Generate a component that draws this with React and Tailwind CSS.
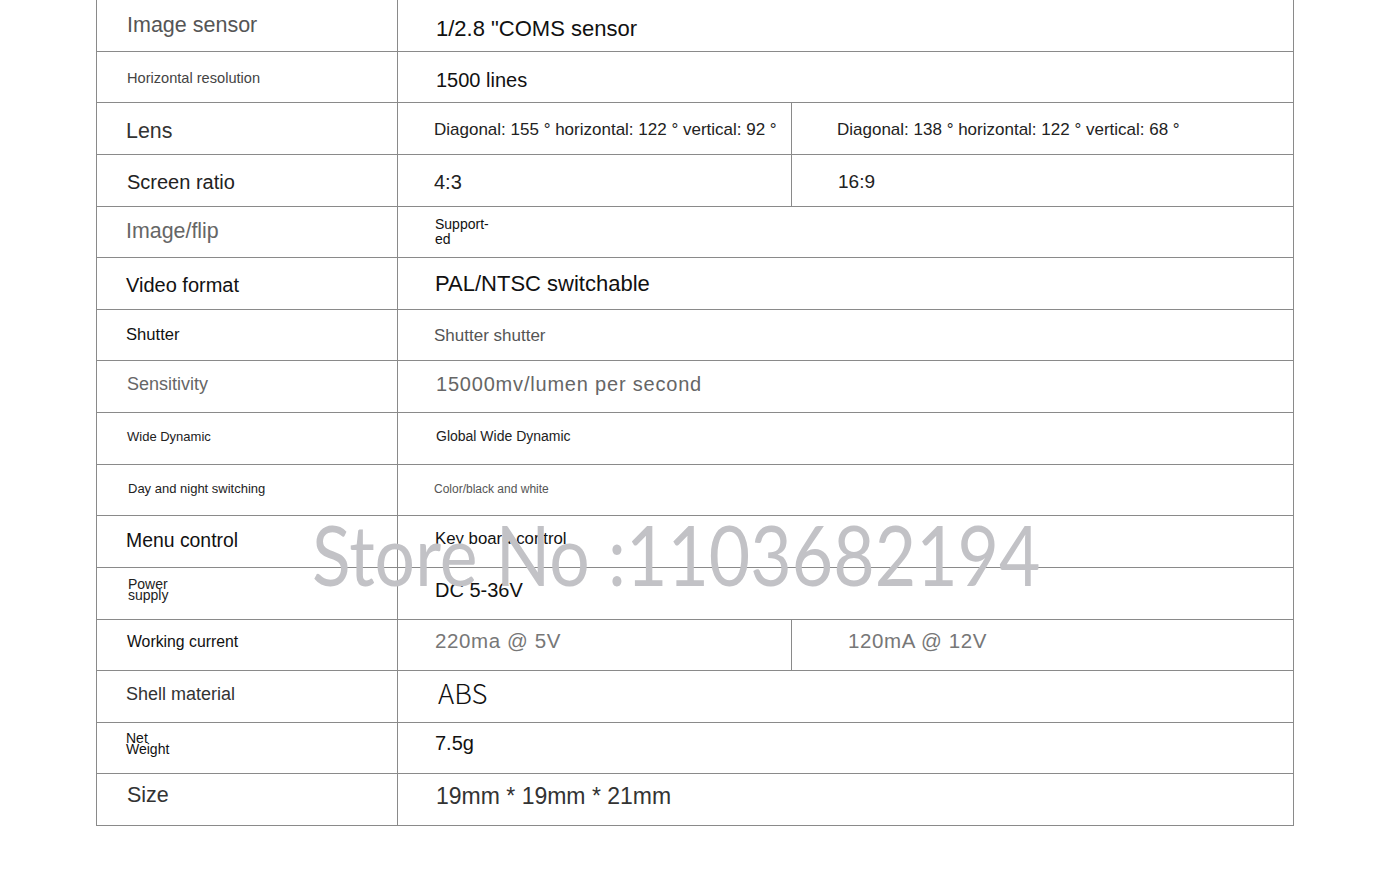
import React from "react";

const F = { fontFamily: '"Liberation Sans", Arial, sans-serif' };

function Row({ h, label, children }) {
  return (
    <div className={`flex border-b border-[#8a8a8a] ${h}`}>
      <div className="w-[301px] shrink-0 border-r border-[#8a8a8a] flex items-center">{label}</div>
      <div className="flex-1 flex items-stretch">{children}</div>
    </div>
  );
}

function Cell({ className, children }) {
  return <div className={`flex items-center ${className}`}>{children}</div>;
}

export default function App() {
  return (
    <div className="w-[1390px] h-[894px] bg-white relative overflow-hidden" style={F}>
      <div className="ml-[96px] w-[1198px] border-l border-r border-[#8a8a8a]">
        <Row h="h-[52px]" label={<span className="pl-[30px] text-[21.5px] text-[#555] mt-[0px]">Image sensor</span>}>
          <Cell className="pl-[38px] flex-1"><span className="text-[22px] text-[#111] mt-[5px]">1/2.8 "COMS sensor</span></Cell>
        </Row>
        <Row h="h-[51px]" label={<span className="pl-[30px] text-[14.6px] text-[#444] mt-[3px]">Horizontal resolution</span>}>
          <Cell className="pl-[38px] flex-1"><span className="text-[20px] text-[#111] mt-[6px]">1500 lines</span></Cell>
        </Row>
        <Row h="h-[52px]" label={<span className="pl-[29px] text-[21.4px] text-[#333] mt-[6px]">Lens</span>}>
          <Cell className="pl-[36px] w-[394px] border-r border-[#8a8a8a]"><span className="text-[17px] text-[#222] mt-[2px]">Diagonal: 155 ° horizontal: 122 ° vertical: 92 °</span></Cell>
          <Cell className="pl-[45px] flex-1"><span className="text-[17px] text-[#222] mt-[2px]">Diagonal: 138 ° horizontal: 122 ° vertical: 68 °</span></Cell>
        </Row>
        <Row h="h-[52px]" label={<span className="pl-[30px] text-[20px] text-[#222] mt-[2px]">Screen ratio</span>}>
          <Cell className="pl-[36px] w-[394px] border-r border-[#8a8a8a]"><span className="text-[20px] text-[#222] mt-[2px]">4:3</span></Cell>
          <Cell className="pl-[46px] flex-1"><span className="text-[19px] text-[#222] mt-[4px]">16:9</span></Cell>
        </Row>
        <Row h="h-[51px]" label={<span className="pl-[29px] text-[21.4px] text-[#666] mt-[-1px]">Image/flip</span>}>
          <Cell className="pl-[37px] flex-1"><span className="text-[14px] leading-[15px] text-[#111] mt-[-1px]">Support-<br />ed</span></Cell>
        </Row>
        <Row h="h-[52px]" label={<span className="pl-[29px] text-[20px] text-[#111] mt-[2px]">Video format</span>}>
          <Cell className="pl-[37px] flex-1"><span className="text-[22px] text-[#111]">PAL/NTSC switchable</span></Cell>
        </Row>
        <Row h="h-[51px]" label={<span className="pl-[29px] text-[16.6px] text-[#111] mt-[1px]">Shutter</span>}>
          <Cell className="pl-[36px] flex-1"><span className="text-[17px] text-[#555] mt-[1px]">Shutter shutter</span></Cell>
        </Row>
        <Row h="h-[52px]" label={<span className="pl-[30px] text-[18px] text-[#666] mt-[-5px]">Sensitivity</span>}>
          <Cell className="pl-[38px] flex-1"><span className="text-[20px] text-[#666] tracking-[0.8px] mt-[-5px]">15000mv/lumen per second</span></Cell>
        </Row>
        <Row h="h-[52px]" label={<span className="pl-[30px] text-[13px] text-[#222] mt-[-3px]">Wide Dynamic</span>}>
          <Cell className="pl-[38px] flex-1"><span className="text-[14px] text-[#222] mt-[-4px]">Global Wide Dynamic</span></Cell>
        </Row>
        <Row h="h-[51px]" label={<span className="pl-[31px] text-[13px] text-[#222] mt-[-2px]">Day and night switching</span>}>
          <Cell className="pl-[36px] flex-1"><span className="text-[12px] text-[#555] mt-[-2px]">Color/black and white</span></Cell>
        </Row>
        <Row h="h-[52px]" label={<span className="pl-[29px] text-[19.4px] text-[#111] mt-[-1px]">Menu control</span>}>
          <Cell className="pl-[37px] flex-1"><span className="text-[16.8px] text-[#111] mt-[-6px]">Key board control</span></Cell>
        </Row>
        <Row h="h-[52px]" label={<span className="pl-[31px] text-[14px] leading-[11px] text-[#222] mt-[-8px]">Power<br />supply</span>}>
          <Cell className="pl-[37px] flex-1"><span className="text-[20px] text-[#111] mt-[-7px]">DC 5-36V</span></Cell>
        </Row>
        <Row h="h-[51px]" label={<span className="pl-[30px] text-[15.8px] text-[#111] mt-[-7px]">Working current</span>}>
          <Cell className="pl-[37px] w-[394px] border-r border-[#8a8a8a]"><span className="text-[20.5px] text-[#777] tracking-[0.6px] mt-[-7px]">220ma @ 5V</span></Cell>
          <Cell className="pl-[56px] flex-1"><span className="text-[20.5px] text-[#777] tracking-[0.6px] mt-[-7px]">120mA @ 12V</span></Cell>
        </Row>
        <Row h="h-[52px]" label={<span className="pl-[29px] text-[18px] text-[#333] mt-[-4px]">Shell material</span>}>
          <Cell className="pl-[40px] flex-1"><span className="text-[27.5px] text-[#111] mt-[-7px]" style={{ fontFamily: '"Noto Sans CJK SC", "Noto Sans", sans-serif', fontWeight: 300 }}>ABS</span></Cell>
        </Row>
        <Row h="h-[51px]" label={<span className="pl-[29px] text-[14px] leading-[11px] text-[#111] mt-[-9px]">Net<br />Weight</span>}>
          <Cell className="pl-[37px] flex-1"><span className="text-[20px] text-[#111] mt-[-11px]">7.5g</span></Cell>
        </Row>
        <Row h="h-[52px]" label={<span className="pl-[30px] text-[21.5px] text-[#333] mt-[-9px]">Size</span>}>
          <Cell className="pl-[38px] flex-1"><span className="text-[23px] text-[#333] mt-[-7px]">19mm * 19mm * 21mm</span></Cell>
        </Row>
      </div>
      <div
        className="absolute left-[312px] top-[504px] text-[84px] leading-[100px] text-[#c2c2c6] whitespace-nowrap pointer-events-none origin-left scale-x-[0.851]"
        style={{ fontFamily: 'Lato, "Open Sans", sans-serif' }}
      >
        Store No :1103682194
      </div>
    </div>
  );
}
